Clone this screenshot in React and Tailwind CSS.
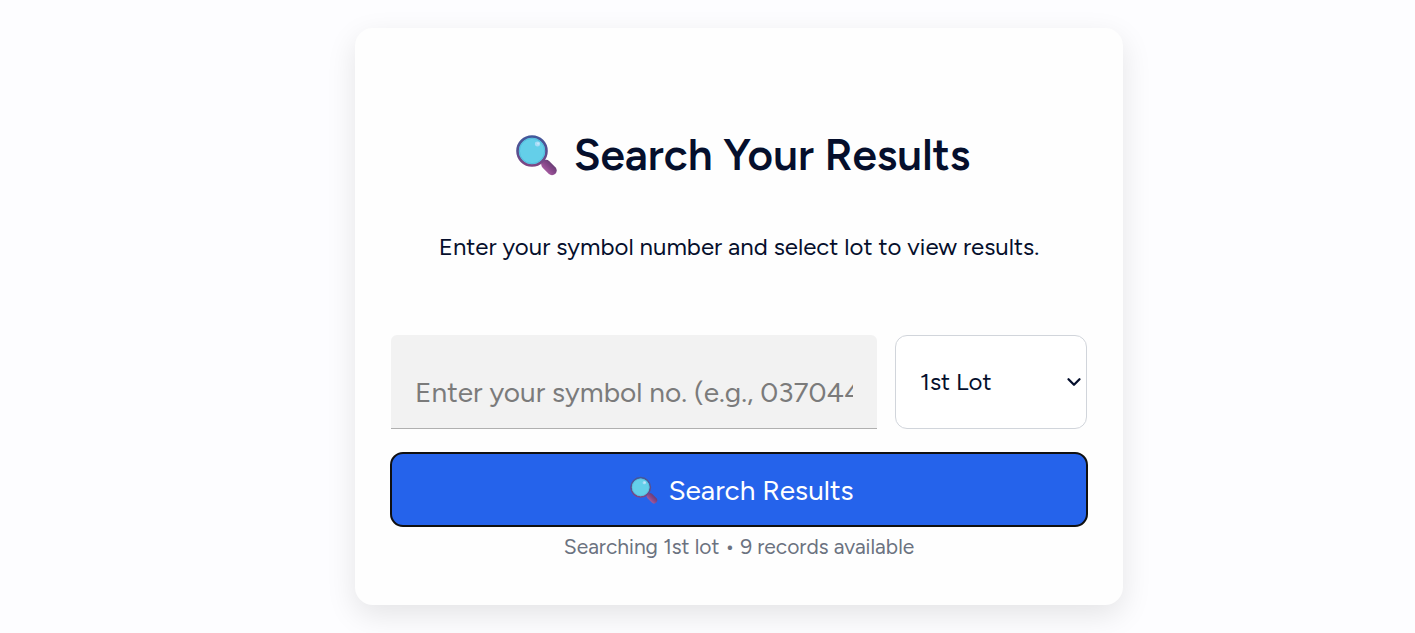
import React, { useState } from "react";
import { ChevronDown } from "lucide-react";

const lots = [
    { value: "1", label: "1st Lot", name: "1st lot", records: 9 },
    { value: "2", label: "2nd Lot", name: "2nd lot", records: 7 },
];

const MagnifierIcon = ({ id, className = "" }) => (
    <svg viewBox="0 0 42 42" className={className} aria-hidden="true">
        <defs>
            <linearGradient id={`${id}-rim`} x1="0" y1="0" x2="0" y2="1">
                <stop offset="0" stopColor="#42589b" />
                <stop offset="0.55" stopColor="#5a4e8e" />
                <stop offset="1" stopColor="#7f4683" />
            </linearGradient>
            <linearGradient id={`${id}-handle`} x1="1" y1="0" x2="0" y2="1">
                <stop offset="0" stopColor="#6d3f78" />
                <stop offset="0.5" stopColor="#87478a" />
                <stop offset="1" stopColor="#a0589c" />
            </linearGradient>
        </defs>
        <path d="M25 26l5 5" stroke="#664477" strokeWidth="4" />
        <path d="M30 30.5l6 6" stroke={`url(#${id}-handle)`} strokeWidth="9.5" strokeLinecap="round" />
        <circle cx="16" cy="17" r="14.5" fill="#64cfe9" stroke={`url(#${id}-rim)`} strokeWidth="2.6" />
        <circle cx="16" cy="17" r="12.6" fill="none" stroke="#52bddd" strokeWidth="1" />
        <ellipse cx="21.5" cy="10" rx="2.6" ry="2.4" fill="#a8dcf7" />
        <ellipse cx="22.2" cy="9.6" rx="1.2" ry="1.1" fill="#c6e8fb" />
    </svg>
);

const SearchResults = () => {
    const [symbol, setSymbol] = useState("");
    const [lotValue, setLotValue] = useState("1");
    const lot = lots.find((item) => item.value === lotValue);

    return (
        <section className="w-full max-w-3xl rounded-[18px] bg-[#fefefe] px-9 pt-24 pb-11 shadow-[0_10px_30px_rgba(0,0,0,0.1)]">
            <h1 className="flex items-center justify-center gap-4 pl-2 text-[44px] leading-[62px] font-semibold">
                <MagnifierIcon id="title" className="size-[42px]" />
                Search Your Results
            </h1>
            <p className="mt-11 text-center text-[24px] leading-[34px]">
                Enter your symbol number and select lot to view results.
            </p>

            <form className="mt-[71px]" onSubmit={(event) => event.preventDefault()}>
                <div className="flex gap-[18px]">
                    <input
                        type="text"
                        aria-label="Symbol number"
                        value={symbol}
                        onChange={(event) => setSymbol(event.target.value)}
                        placeholder="Enter your symbol no. (e.g., 03704426)"
                        className="h-[94px] min-w-0 flex-1 rounded-t-md border-b border-[#b0b0b0] bg-[#f2f2f2] px-6 pt-5 text-[28px] outline-none placeholder:text-[#7b7b7b]"
                    />
                    <div className="relative w-48">
                        <select
                            aria-label="Lot"
                            value={lotValue}
                            onChange={(event) => setLotValue(event.target.value)}
                            className="h-[94px] w-full appearance-none rounded-xl border border-[#d1d5db] bg-white px-6 text-[24px]"
                        >
                            {lots.map((item) => (
                                <option key={item.value} value={item.value}>{item.label}</option>
                            ))}
                        </select>
                        <ChevronDown className="pointer-events-none absolute top-9 right-0.5 size-[22px]" strokeWidth={2.5} />
                    </div>
                </div>
                <button
                    type="submit"
                    className="mt-6 flex h-[73px] w-full items-center justify-center gap-2.5 rounded-xl bg-[#2563eb] pl-1.5 text-[28px] text-white outline-2 -outline-offset-1 outline-[#101010]"
                >
                    <MagnifierIcon id="submit" className="size-[28px]" />
                    Search Results
                </button>
            </form>
            <p className="mt-[7px] text-center text-[21px] leading-[28px] text-[#6b7280]">
                Searching {lot.name} • {lot.records} records available
            </p>
        </section>
    );
};

const App = () => (
    <main className="flex min-h-screen items-start justify-center bg-[#fdfdff] pt-7 pb-7 pl-[63px] font-['Google_Sans',Figtree,Roboto,sans-serif] text-[#050f2c]">
        <SearchResults />
    </main>
);

export default App;
